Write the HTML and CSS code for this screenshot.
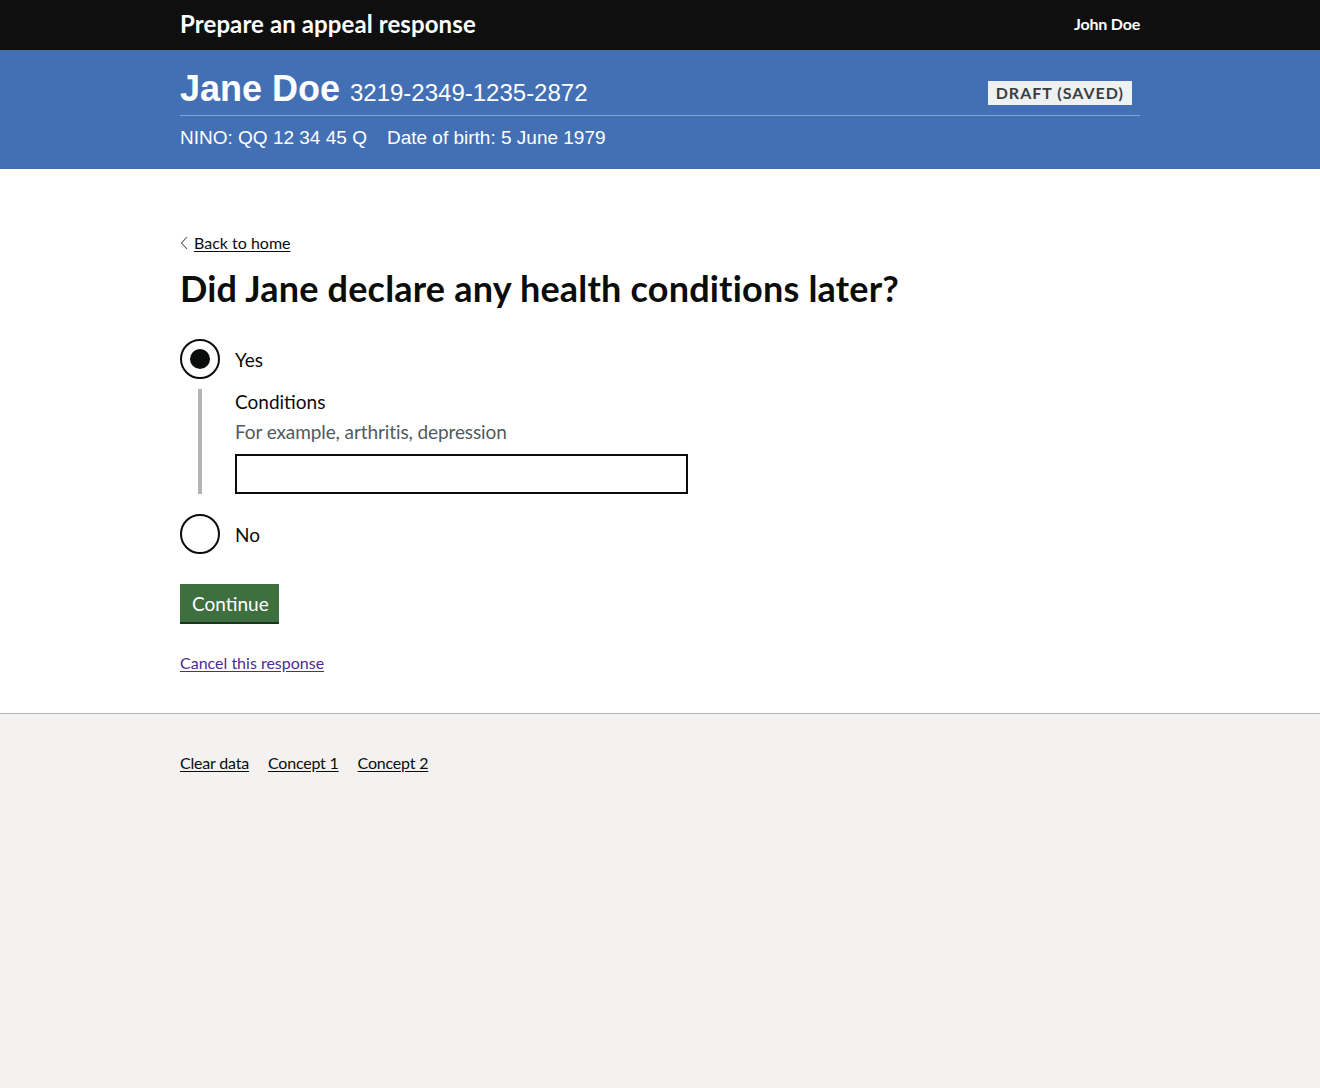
FILE: index.html
```html
<!DOCTYPE html>
<html lang="en">
<head>
<meta charset="utf-8">
<title>Prepare an appeal response</title>
<link rel="stylesheet" href="styles.css">
</head>
<body>
<header class="topbar">
  <div class="container topbar-inner">
    <span class="service-name">Prepare an appeal response</span>
    <span class="user-name">John Doe</span>
  </div>
</header>
<section class="banner">
  <div class="container">
    <div class="banner-top">
      <h1 class="person"><span class="person-name">Jane Doe</span> <span class="person-ref">3219-2349-1235-2872</span></h1>
      <strong class="tag">DRAFT (SAVED)</strong>
    </div>
    <p class="person-meta"><span>NINO: QQ 12 34 45 Q</span><span>Date of birth: 5 June 1979</span></p>
  </div>
</section>
<main class="main">
  <div class="container">
    <a class="back-link" href="#"><svg class="chev" width="8" height="14" viewBox="0 0 8 14"><path d="M7 1 L1.5 7 L7 13" fill="none" stroke="#505a5f" stroke-width="1.1"/></svg>Back to home</a>
    <h2 class="question">Did Jane declare any health conditions later?</h2>
    <div class="radios">
      <div class="radio-item">
        <span class="radio checked"></span>
        <span class="radio-label">Yes</span>
      </div>
      <div class="conditional">
        <div class="field-label">Conditions</div>
        <div class="hint">For example, arthritis, depression</div>
        <div class="input"></div>
      </div>
      <div class="radio-item">
        <span class="radio"></span>
        <span class="radio-label">No</span>
      </div>
    </div>
    <button class="button" type="button">Continue</button>
    <p class="cancel"><a href="#" class="link-visited">Cancel this response</a></p>
  </div>
</main>
<footer class="footer">
  <div class="container footer-links">
    <a href="#">Clear data</a>
    <a href="#">Concept 1</a>
    <a href="#">Concept 2</a>
  </div>
</footer>
</body>
</html>
```

FILE: styles.css
```css
* { box-sizing: border-box; }
html, body { margin: 0; padding: 0; }
body {
  background: #f3f2f1;
  font-family: Lato, "Noto Sans", sans-serif;
  color: #0b0c0c;
  min-height: 1088px;
}
.container { width: 960px; margin: 0 auto; }

.topbar { background: #0f0f0f; height: 50px; }
.topbar-inner { display: flex; justify-content: space-between; align-items: center; height: 50px; padding-bottom: 4px; }
.service-name { color: #fff; font-weight: 700; font-size: 24px; letter-spacing: 0.1px; }
.user-name { color: #fff; font-weight: 700; font-size: 16px; letter-spacing: -0.2px; }

.banner { background: #436fb5; height: 119px; padding-top: 20px; font-family: "Liberation Sans", Arial, sans-serif; color: #fff; }
.banner-top { display: flex; justify-content: space-between; align-items: center; border-bottom: 1px solid #7ea2db; padding-bottom: 4px; height: 46px; }
.person { margin: 0; font-weight: 400; line-height: 40px; }
.person-name { font-size: 36px; font-weight: 700; }
.person-ref { font-size: 24px; margin-left: 1px; }
.tag { background: #eef0f1; color: #383f43; font-family: Lato, "Noto Sans", sans-serif; font-weight: 700; font-size: 16px; letter-spacing: 1px; padding: 2px 8px 2px 8px; line-height: 20px; height: 24px; margin-right: 8px; margin-top: 4px; }
.person-meta { margin: 10px 0 0; font-size: 19px; line-height: 24px; display: flex; gap: 20px; }

.main { background: #fff; padding: 64px 0 40px; border-bottom: 1px solid #b1b4b6; }
.back-link { display: inline-flex; align-items: center; font-size: 16px; line-height: 20px; color: #0b0c0c; text-decoration: underline; text-underline-offset: 2px; }
.chev { margin-right: 6px; }
.question { font-size: 36px; line-height: 40px; font-weight: 700; margin: 15px 0 31px; letter-spacing: 0.2px; }

.radio-item { display: flex; align-items: center; height: 40px; margin-bottom: 10px; }
.radio { width: 40px; height: 40px; border: 2px solid #0b0c0c; border-radius: 50%; position: relative; flex: none; }
.radio.checked::after { content: ""; position: absolute; left: 8px; top: 8px; width: 20px; height: 20px; border-radius: 50%; background: #0b0c0c; }
.radio-label { margin-left: 15px; font-size: 19px; line-height: 25px; }
.conditional { margin: 0 0 20px 18px; border-left: 4px solid #b1b4b6; padding-left: 33px; }
.field-label { font-size: 19px; line-height: 25px; }
.hint { font-size: 19px; line-height: 25px; color: #505a5f; margin-top: 5px; margin-bottom: 10px; letter-spacing: -0.1px; }
.input { width: 453px; height: 40px; border: 2px solid #0b0c0c; }

.radios { margin-bottom: 30px; }
.radios .radio-item:last-child { margin-bottom: 0; }
.button { display: block; background: #3e6f3f; color: #fff; border: 0; box-shadow: 0 2px 0 #1b331c; font-family: inherit; font-size: 19px; line-height: 23px; padding: 8px 12px 7px; margin: 0; height: 38px; width: 99px; }
.cancel { margin: 31px 0 0; font-size: 16px; line-height: 20px; }
.link-visited { color: #4c2c92; text-underline-offset: 2px; }

.footer { padding-top: 39px; }
.footer-links { display: flex; gap: 19px; font-size: 16px; line-height: 20px; }
.footer-links a { color: #0b0c0c; text-underline-offset: 2px; letter-spacing: -0.2px; }
```
